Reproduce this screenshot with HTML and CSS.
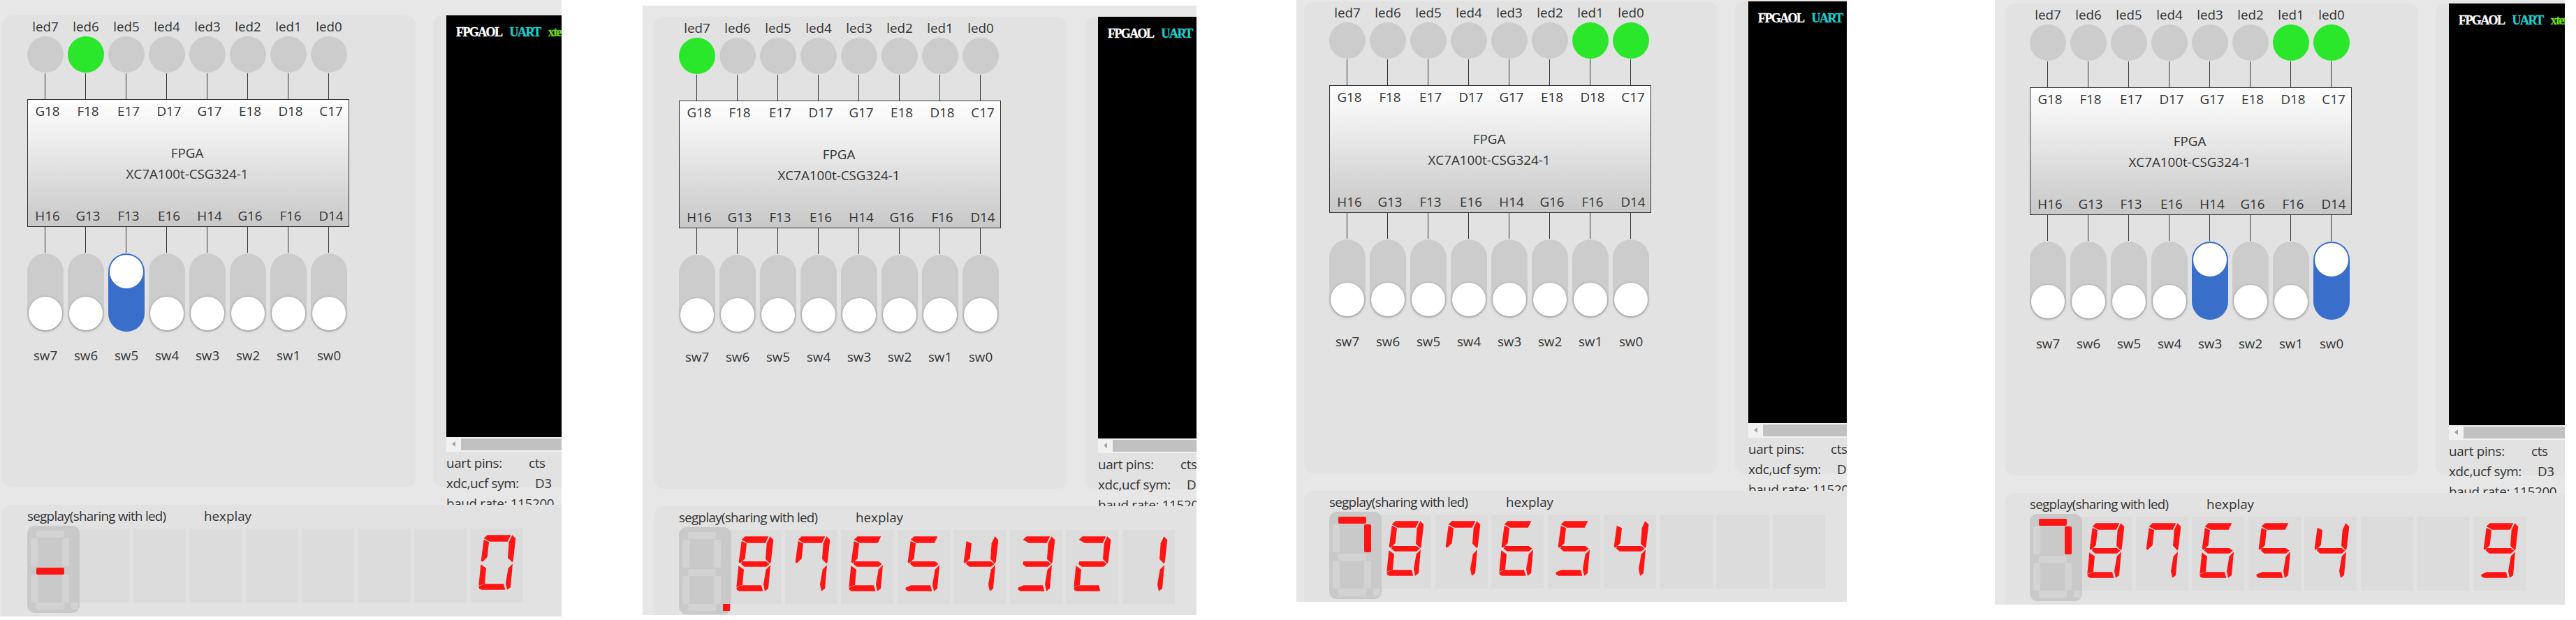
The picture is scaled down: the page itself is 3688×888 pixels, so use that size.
FILE: index.html
```html
<!DOCTYPE html>
<html lang="en">
<head>
<meta charset="utf-8">
<title>FPGAOL</title>
<link rel="stylesheet" href="styles.css">
</head>
<body>
<svg class="defs" aria-hidden="true">
  <defs>
    <polygon id="sa" points="50,54 65,40 166,40 152,68 75,68"/>
    <polygon id="sb" points="172,40 187,55 176,150 172,157 153,137 158,70"/>
    <polygon id="sc" points="174,163 165,264 150,275 144,246 155,182"/>
    <polygon id="sd" points="28,260 52,250 135,250 142,275 40,275 30,270"/>
    <polygon id="se" points="37,166 60,182 54,248 28,258"/>
    <polygon id="sf" points="50,60 72,70 65,135 44,155 38,150"/>
    <polygon id="sg" points="52,147 155,147 170,158 155,170 62,170 48,158"/>
    <symbol id="d0" viewBox="-6 12 225 318"><use href="#sa"/><use href="#sb"/><use href="#sc"/><use href="#sd"/><use href="#se"/><use href="#sf"/></symbol>
    <symbol id="d1" viewBox="-6 12 225 318"><use href="#sb"/><use href="#sc"/></symbol>
    <symbol id="d2" viewBox="-6 12 225 318"><use href="#sa"/><use href="#sb"/><use href="#sg"/><use href="#se"/><use href="#sd"/></symbol>
    <symbol id="d3" viewBox="-6 12 225 318"><use href="#sa"/><use href="#sb"/><use href="#sg"/><use href="#sc"/><use href="#sd"/></symbol>
    <symbol id="d4" viewBox="-6 12 225 318"><use href="#sf"/><use href="#sg"/><use href="#sb"/><use href="#sc"/></symbol>
    <symbol id="d5" viewBox="-6 12 225 318"><use href="#sa"/><use href="#sf"/><use href="#sg"/><use href="#sc"/><use href="#sd"/></symbol>
    <symbol id="d6" viewBox="-6 12 225 318"><use href="#sa"/><use href="#sf"/><use href="#sg"/><use href="#se"/><use href="#sc"/><use href="#sd"/></symbol>
    <symbol id="d7" viewBox="-6 12 225 318"><use href="#sa"/><use href="#sf"/><use href="#sb"/><use href="#sc"/></symbol>
    <symbol id="d8" viewBox="-6 12 225 318"><use href="#sa"/><use href="#sb"/><use href="#sc"/><use href="#sd"/><use href="#se"/><use href="#sf"/><use href="#sg"/></symbol>
    <symbol id="d9" viewBox="-6 12 225 318"><use href="#sa"/><use href="#sb"/><use href="#sc"/><use href="#sd"/><use href="#sf"/><use href="#sg"/></symbol>
  </defs>
</svg>

<!-- Shot A -->
<section class="shot shot-a">
  <div class="top">
    <div class="card board">
      <div class="row labels"><span>led7</span><span>led6</span><span>led5</span><span>led4</span><span>led3</span><span>led2</span><span>led1</span><span>led0</span></div>
      <div class="row leds"><i class="led"></i><i class="led on"></i><i class="led"></i><i class="led"></i><i class="led"></i><i class="led"></i><i class="led"></i><i class="led"></i></div>
      <div class="wires"></div>
      <div class="chip">
        <div class="row pins"><span>G18</span><span>F18</span><span>E17</span><span>D17</span><span>G17</span><span>E18</span><span>D18</span><span>C17</span></div>
        <div class="chip-name"><div>FPGA</div><div>XC7A100t-CSG324-1</div></div>
        <div class="row pins"><span>H16</span><span>G13</span><span>F13</span><span>E16</span><span>H14</span><span>G16</span><span>F16</span><span>D14</span></div>
      </div>
      <div class="wires"></div>
      <div class="row switches"><i class="sw"></i><i class="sw"></i><i class="sw on"></i><i class="sw"></i><i class="sw"></i><i class="sw"></i><i class="sw"></i><i class="sw"></i></div>
      <div class="row labels sw-labels"><span>sw7</span><span>sw6</span><span>sw5</span><span>sw4</span><span>sw3</span><span>sw2</span><span>sw1</span><span>sw0</span></div>
    </div>
    <div class="card uart">
      <div class="term"><b class="t-white">FPGAOL</b> <b class="t-cyan">UART</b> <b class="t-green">xterm</b></div>
      <div class="hscroll"><div class="thumb"></div></div>
      <div class="info">
        <div><span class="k k-uart">uart pins:</span>cts</div>
        <div><span class="k k-xdc">xdc,ucf sym:</span>D3</div>
        <div>baud rate: 115200</div>
      </div>
    </div>
  </div>
  <div class="card segs">
    <div class="seg-title"><span class="seg-name">segplay(sharing with led)</span><span>hexplay</span></div>
    <div class="seg-row">
      <svg class="segbox" viewBox="0 0 75 125"><rect class="s" x="13" y="7" width="40" height="10" rx="2"/><rect class="s" x="50" y="18" width="10" height="40" rx="2"/><rect class="s" x="50" y="70" width="10" height="40" rx="2"/><rect class="s" x="13" y="110" width="40" height="10" rx="2"/><rect class="s" x="5" y="70" width="10" height="40" rx="2"/><rect class="s" x="5" y="18" width="10" height="40" rx="2"/><rect class="s on" x="13" y="60" width="40" height="10" rx="2"/><rect class="s" x="63" y="110" width="10" height="10" rx="2"/></svg>
      <div class="hex"></div><div class="hex"></div><div class="hex"></div><div class="hex"></div><div class="hex"></div><div class="hex"></div><div class="hex"></div>
      <div class="hex"><svg class="digit"><use href="#d0"/></svg></div>
    </div>
  </div>
</section>

<!-- Shot B -->
<section class="shot shot-b">
  <div class="top">
    <div class="card board">
      <div class="row labels"><span>led7</span><span>led6</span><span>led5</span><span>led4</span><span>led3</span><span>led2</span><span>led1</span><span>led0</span></div>
      <div class="row leds"><i class="led on"></i><i class="led"></i><i class="led"></i><i class="led"></i><i class="led"></i><i class="led"></i><i class="led"></i><i class="led"></i></div>
      <div class="wires"></div>
      <div class="chip">
        <div class="row pins"><span>G18</span><span>F18</span><span>E17</span><span>D17</span><span>G17</span><span>E18</span><span>D18</span><span>C17</span></div>
        <div class="chip-name"><div>FPGA</div><div>XC7A100t-CSG324-1</div></div>
        <div class="row pins"><span>H16</span><span>G13</span><span>F13</span><span>E16</span><span>H14</span><span>G16</span><span>F16</span><span>D14</span></div>
      </div>
      <div class="wires"></div>
      <div class="row switches"><i class="sw"></i><i class="sw"></i><i class="sw"></i><i class="sw"></i><i class="sw"></i><i class="sw"></i><i class="sw"></i><i class="sw"></i></div>
      <div class="row labels sw-labels"><span>sw7</span><span>sw6</span><span>sw5</span><span>sw4</span><span>sw3</span><span>sw2</span><span>sw1</span><span>sw0</span></div>
    </div>
    <div class="card uart">
      <div class="term"><b class="t-white">FPGAOL</b> <b class="t-cyan">UART</b> <b class="t-green">xterm</b></div>
      <div class="hscroll"><div class="thumb"></div></div>
      <div class="info">
        <div><span class="k k-uart">uart pins:</span>cts</div>
        <div><span class="k k-xdc">xdc,ucf sym:</span>D3</div>
        <div>baud rate: 115200</div>
      </div>
    </div>
  </div>
  <div class="card segs">
    <div class="seg-title"><span class="seg-name">segplay(sharing with led)</span><span>hexplay</span></div>
    <div class="seg-row">
      <svg class="segbox" viewBox="0 0 75 125"><rect class="s" x="13" y="7" width="40" height="10" rx="2"/><rect class="s" x="50" y="18" width="10" height="40" rx="2"/><rect class="s" x="50" y="70" width="10" height="40" rx="2"/><rect class="s" x="13" y="110" width="40" height="10" rx="2"/><rect class="s" x="5" y="70" width="10" height="40" rx="2"/><rect class="s" x="5" y="18" width="10" height="40" rx="2"/><rect class="s" x="13" y="60" width="40" height="10" rx="2"/><rect class="dot on" x="63" y="110" width="10" height="10"/></svg>
      <div class="hex"><svg class="digit"><use href="#d8"/></svg></div>
      <div class="hex"><svg class="digit"><use href="#d7"/></svg></div>
      <div class="hex"><svg class="digit"><use href="#d6"/></svg></div>
      <div class="hex"><svg class="digit"><use href="#d5"/></svg></div>
      <div class="hex"><svg class="digit"><use href="#d4"/></svg></div>
      <div class="hex"><svg class="digit"><use href="#d3"/></svg></div>
      <div class="hex"><svg class="digit"><use href="#d2"/></svg></div>
      <div class="hex"><svg class="digit"><use href="#d1"/></svg></div>
    </div>
  </div>
</section>

<!-- Shot C -->
<section class="shot shot-c">
  <div class="top">
    <div class="card board">
      <div class="row labels"><span>led7</span><span>led6</span><span>led5</span><span>led4</span><span>led3</span><span>led2</span><span>led1</span><span>led0</span></div>
      <div class="row leds"><i class="led"></i><i class="led"></i><i class="led"></i><i class="led"></i><i class="led"></i><i class="led"></i><i class="led on"></i><i class="led on"></i></div>
      <div class="wires"></div>
      <div class="chip">
        <div class="row pins"><span>G18</span><span>F18</span><span>E17</span><span>D17</span><span>G17</span><span>E18</span><span>D18</span><span>C17</span></div>
        <div class="chip-name"><div>FPGA</div><div>XC7A100t-CSG324-1</div></div>
        <div class="row pins"><span>H16</span><span>G13</span><span>F13</span><span>E16</span><span>H14</span><span>G16</span><span>F16</span><span>D14</span></div>
      </div>
      <div class="wires"></div>
      <div class="row switches"><i class="sw"></i><i class="sw"></i><i class="sw"></i><i class="sw"></i><i class="sw"></i><i class="sw"></i><i class="sw"></i><i class="sw"></i></div>
      <div class="row labels sw-labels"><span>sw7</span><span>sw6</span><span>sw5</span><span>sw4</span><span>sw3</span><span>sw2</span><span>sw1</span><span>sw0</span></div>
    </div>
    <div class="card uart">
      <div class="term"><b class="t-white">FPGAOL</b> <b class="t-cyan">UART</b> <b class="t-green">xterm</b></div>
      <div class="hscroll"><div class="thumb"></div></div>
      <div class="info">
        <div><span class="k k-uart">uart pins:</span>cts</div>
        <div><span class="k k-xdc">xdc,ucf sym:</span>D3</div>
        <div>baud rate: 115200</div>
      </div>
    </div>
  </div>
  <div class="card segs">
    <div class="seg-title"><span class="seg-name">segplay(sharing with led)</span><span>hexplay</span></div>
    <div class="seg-row">
      <svg class="segbox" viewBox="0 0 75 125"><rect class="s on" x="13" y="7" width="40" height="10" rx="2"/><rect class="s on" x="50" y="18" width="10" height="40" rx="2"/><rect class="s" x="50" y="70" width="10" height="40" rx="2"/><rect class="s" x="13" y="110" width="40" height="10" rx="2"/><rect class="s" x="5" y="70" width="10" height="40" rx="2"/><rect class="s" x="5" y="18" width="10" height="40" rx="2"/><rect class="s" x="13" y="60" width="40" height="10" rx="2"/><rect class="s" x="63" y="110" width="10" height="10" rx="2"/></svg>
      <div class="hex"><svg class="digit"><use href="#d8"/></svg></div>
      <div class="hex"><svg class="digit"><use href="#d7"/></svg></div>
      <div class="hex"><svg class="digit"><use href="#d6"/></svg></div>
      <div class="hex"><svg class="digit"><use href="#d5"/></svg></div>
      <div class="hex"><svg class="digit"><use href="#d4"/></svg></div>
      <div class="hex"></div><div class="hex"></div><div class="hex"></div>
    </div>
  </div>
</section>

<!-- Shot D -->
<section class="shot shot-d">
  <div class="top">
    <div class="card board">
      <div class="row labels"><span>led7</span><span>led6</span><span>led5</span><span>led4</span><span>led3</span><span>led2</span><span>led1</span><span>led0</span></div>
      <div class="row leds"><i class="led"></i><i class="led"></i><i class="led"></i><i class="led"></i><i class="led"></i><i class="led"></i><i class="led on"></i><i class="led on"></i></div>
      <div class="wires"></div>
      <div class="chip">
        <div class="row pins"><span>G18</span><span>F18</span><span>E17</span><span>D17</span><span>G17</span><span>E18</span><span>D18</span><span>C17</span></div>
        <div class="chip-name"><div>FPGA</div><div>XC7A100t-CSG324-1</div></div>
        <div class="row pins"><span>H16</span><span>G13</span><span>F13</span><span>E16</span><span>H14</span><span>G16</span><span>F16</span><span>D14</span></div>
      </div>
      <div class="wires"></div>
      <div class="row switches"><i class="sw"></i><i class="sw"></i><i class="sw"></i><i class="sw"></i><i class="sw on"></i><i class="sw"></i><i class="sw"></i><i class="sw on"></i></div>
      <div class="row labels sw-labels"><span>sw7</span><span>sw6</span><span>sw5</span><span>sw4</span><span>sw3</span><span>sw2</span><span>sw1</span><span>sw0</span></div>
    </div>
    <div class="card uart">
      <div class="term"><b class="t-white">FPGAOL</b> <b class="t-cyan">UART</b> <b class="t-green">xterm</b></div>
      <div class="hscroll"><div class="thumb"></div></div>
      <div class="info">
        <div><span class="k k-uart">uart pins:</span>cts</div>
        <div><span class="k k-xdc">xdc,ucf sym:</span>D3</div>
        <div>baud rate: 115200</div>
      </div>
    </div>
  </div>
  <div class="card segs">
    <div class="seg-title"><span class="seg-name">segplay(sharing with led)</span><span>hexplay</span></div>
    <div class="seg-row">
      <svg class="segbox" viewBox="0 0 75 125"><rect class="s on" x="13" y="7" width="40" height="10" rx="2"/><rect class="s on" x="50" y="18" width="10" height="40" rx="2"/><rect class="s" x="50" y="70" width="10" height="40" rx="2"/><rect class="s" x="13" y="110" width="40" height="10" rx="2"/><rect class="s" x="5" y="70" width="10" height="40" rx="2"/><rect class="s" x="5" y="18" width="10" height="40" rx="2"/><rect class="s" x="13" y="60" width="40" height="10" rx="2"/><rect class="s" x="63" y="110" width="10" height="10" rx="2"/></svg>
      <div class="hex"><svg class="digit"><use href="#d8"/></svg></div>
      <div class="hex"><svg class="digit"><use href="#d7"/></svg></div>
      <div class="hex"><svg class="digit"><use href="#d6"/></svg></div>
      <div class="hex"><svg class="digit"><use href="#d5"/></svg></div>
      <div class="hex"><svg class="digit"><use href="#d4"/></svg></div>
      <div class="hex"></div><div class="hex"></div>
      <div class="hex"><svg class="digit"><use href="#d9"/></svg></div>
    </div>
  </div>
</section>
</body>
</html>
```

FILE: styles.css
```css
* { box-sizing: border-box; }

html, body {
  margin: 0;
  width: 3688px;
  height: 888px;
  background: #fff;
  overflow: hidden;
}

body {
  position: relative;
  font-family: "Open Sans", "Noto Sans", sans-serif;
  font-size: 18.8px;
  line-height: 30px;
  color: #333;
}

.defs { position: absolute; width: 0; height: 0; }

/* The four captures sit on a free canvas */
.shot {
  position: absolute;
  overflow: hidden;
  background: #e7e7e7;
}
.shot-a { left: 0;      top: 0; width: 804px; height: 883px; padding: 22px 0 0 3px; }
.shot-b { left: 920px;  top: 8px; width: 793px; height: 873px; padding: 16px 0 0 16px; }
.shot-c { left: 1856px; top: 0; width: 788px; height: 862px; padding: 2px 0 0 11px; }
.shot-d { left: 2856px; top: 0; width: 816px; height: 866px; padding: 5px 0 0 14px; }

.card {
  background: #e2e2e2;
  border-radius: 14px;
}

.top {
  display: flex;
  gap: 25px;
  height: 676px;
  margin-bottom: 25px;
}

/* Board */
.board {
  flex: none;
  width: 592px;
  height: 676px;
  padding: 1px 0 0 36px;
}

.row {
  display: grid;
  grid-template-columns: repeat(8, 58px);
  width: 464px;
}
.row > span { text-align: center; }
.labels { height: 29px; }
.labels > span { padding-right: 6px; }

.leds { height: 53px; }
.led {
  display: block;
  width: 52px;
  height: 52px;
  border-radius: 50%;
  background: #ccc;
}
.led.on { background: #2be72b; }

.wires {
  width: 464px;
  height: 37px;
  background: repeating-linear-gradient(90deg, transparent 0 25px, #333 25px 26px, transparent 26px 58px);
}

.chip {
  width: 461px;
  height: 183px;
  padding-top: 1px;
  border: 1px solid #333;
  background: linear-gradient(180deg, #fff 0%, #c8c8c8 100%);
  display: flex;
  flex-direction: column;
  justify-content: space-between;
}
.pins > span { padding-right: 2px; }
.chip-name {
  text-align: center;
  padding-right: 3px;
}

.switches { height: 112px; margin-top: 1px; }
.sw {
  display: block;
  position: relative;
  width: 52px;
  height: 112px;
  border-radius: 26px;
  background: #ccc;
}
.sw::after {
  content: "";
  position: absolute;
  left: 2px;
  bottom: 2px;
  width: 48px;
  height: 48px;
  border-radius: 50%;
  background: #fff;
  box-shadow: 0 1px 4px rgba(0, 0, 0, .3);
}
.sw.on { background: #396ecb; }
.sw.on::after { bottom: auto; top: 2px; box-shadow: none; }

.sw-labels { margin-top: 19px; }

/* UART */
.uart {
  flex: none;
  width: 400px;
  height: 676px;
  padding-left: 19px;
}
.term {
  width: 100%;
  height: 604px;
  padding: 8px 0 0 14px;
  background: #000;
  font: bold 18px/32px "Liberation Serif", serif;
  letter-spacing: -1.6px;
  word-spacing: 8.3px;
  -webkit-text-stroke: .3px currentColor;
  white-space: nowrap;
  overflow: hidden;
}
.t-white { color: #fff; }
.t-cyan { color: #18d2d2; }
.t-green { color: #6bd81a; }

.hscroll {
  position: relative;
  height: 21px;
  padding: 2px 0 2px 21px;
  background: #f1f1f1;
}
.hscroll::before {
  content: "";
  position: absolute;
  left: 8px;
  top: 6px;
  border: 4px solid transparent;
  border-left-width: 0;
  border-right: 5px solid #a3a3a3;
}
.thumb { height: 17px; background: #c1c1c1; }

.info { line-height: 29px; padding-top: 2px; white-space: nowrap; letter-spacing: -.3px; }
.k { display: inline-block; }
.k-uart { width: 118px; }
.k-xdc { width: 127px; }

/* Segment displays */
.segs {
  position: relative;
  height: 200px;
  padding-left: 36px;
  border-radius: 14px 0 0 0;
}
.seg-title {
  display: flex;
  height: 30px;
  line-height: 32px;
}
.seg-name { width: 253px; letter-spacing: -.7px; }

.seg-row {
  display: flex;
  align-items: flex-start;
  gap: 5.5px;
}
.segbox {
  position: relative;
  z-index: 1;
  flex: none;
  width: 75px;
  height: 125px;
  margin-right: -9.5px;
  border-radius: 11px;
  background: #c9c9c9;
}
.s, .dot { fill: #d3d3d3; }
.s.on, .dot.on { fill: #ff1414; }

.hex {
  flex: none;
  width: 75px;
  height: 106px;
  margin-top: 4px;
  background: #dcdcdc;
}
.digit {
  display: block;
  width: 75px;
  height: 106px;
  fill: #ff1414;
}
```
